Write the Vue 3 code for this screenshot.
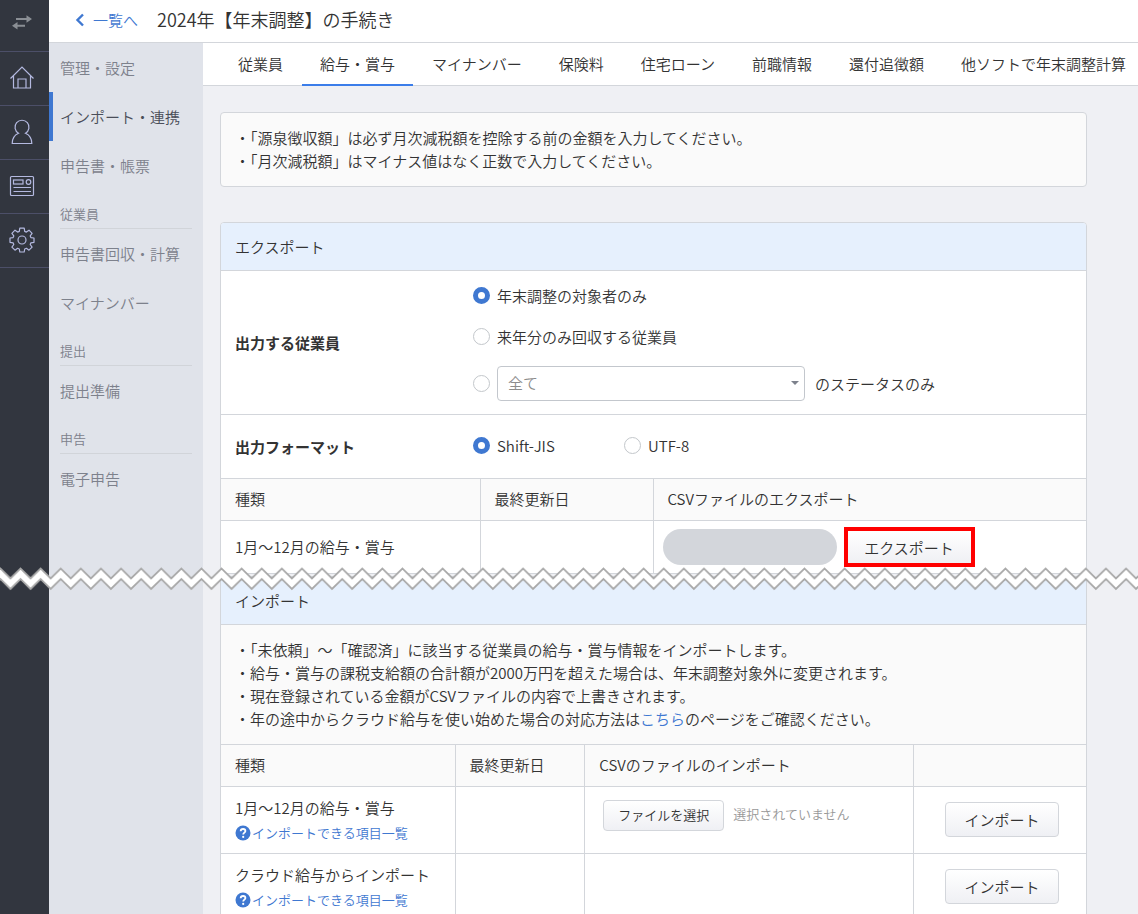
<script setup>
import { ref } from 'vue'

const menu = [
  { items: ['管理・設定', 'インポート・連携', '申告書・帳票'] },
  { heading: '従業員', items: ['申告書回収・計算', 'マイナンバー'] },
  { heading: '提出', items: ['提出準備'] },
  { heading: '申告', items: ['電子申告'] },
]
const activeMenu = 'インポート・連携'

const tabs = ['従業員', '給与・賞与', 'マイナンバー', '保険料', '住宅ローン', '前職情報', '還付追徴額', '他ソフトで年末調整計算']
const activeTab = '給与・賞与'

const target = ref('year')
const format = ref('sjis')
const status = ref('all')
</script>

<template>
  <div class="shell">
    <nav class="rail" aria-label="メイン">
      <button class="rail-item first" type="button" aria-label="切り替え">
        <svg width="24" height="24" viewBox="0 0 24 24" fill="#8a8e94">
          <path d="M6 7h10.500V4.200L22 8l-5.500 3.800V9H6zM15 15.800H7.500v2.800L2 14.800 7.500 11v2.800H15z" />
        </svg>
      </button>
      <button class="rail-item" type="button" aria-label="ホーム">
        <svg width="26" height="26" viewBox="0 0 26 26">
          <path d="M1.500 13.500 13 2l11.500 11.500M4.500 11v12h17V11M9 23v-9h8v9" />
        </svg>
      </button>
      <button class="rail-item" type="button" aria-label="従業員">
        <svg width="26" height="26" viewBox="0 0 26 26">
          <path d="M9.500 14.300a7 7 0 1 1 7 0c3.800 1.700 6.300 5.700 6.300 10.200H3.200c0-4.500 2.500-8.500 6.300-10.200z" />
        </svg>
      </button>
      <button class="rail-item" type="button" aria-label="お知らせ">
        <svg width="26" height="26" viewBox="0 0 26 26">
          <rect x="1.500" y="3.500" width="23" height="19" rx="1" />
          <rect x="4.500" y="7" width="9.500" height="4" />
          <circle cx="19.500" cy="9" r="2.300" />
          <path d="M4.500 14.500h17.500M4.500 18.500h17.500" />
        </svg>
      </button>
      <button class="rail-item" type="button" aria-label="設定">
        <svg width="26" height="26" viewBox="0 0 26 26">
          <circle cx="13" cy="13" r="4" />
          <path d="M10.800 1.200h4.400l.5 3.200 1.700.7 2.600-1.900 3.100 3.100-1.900 2.600.7 1.700 3.100.4v4.300l-3.100.5-.7 1.700 1.900 2.600-3.100 3.100-2.600-1.900-1.700.7-.5 3h-4.400l-.5-3-1.700-.7-2.600 1.900-3.100-3.100 1.900-2.600-.7-1.700-3.100-.5V11l3.100-.4.7-1.700-1.900-2.600L6 3.200l2.600 1.900 1.700-.7z" stroke-linejoin="round" />
        </svg>
      </button>
    </nav>

    <div class="body">
      <header class="topbar">
        <a class="back" href="#">
          <svg width="10" height="14" viewBox="0 0 10 14" aria-hidden="true">
            <path d="M8 1.500 2.500 7 8 12.500" fill="none" stroke="#3f78d1" stroke-width="2.400" />
          </svg>
          一覧へ
        </a>
        <h1>2024年【年末調整】の手続き</h1>
      </header>

      <div class="columns">
        <nav class="side" aria-label="手続きメニュー">
          <template v-for="(group, i) in menu" :key="i">
            <h2 v-if="group.heading">{{ group.heading }}</h2>
            <a v-for="item in group.items" :key="item" href="#" :class="{ active: item === activeMenu }">{{ item }}</a>
          </template>
        </nav>

        <div class="page">
          <nav class="tabs" aria-label="タブ">
            <a v-for="tab in tabs" :key="tab" href="#" :class="{ active: tab === activeTab }">{{ tab }}</a>
          </nav>

          <main>
            <ul class="notes notice">
              <li>・「源泉徴収額」は必ず月次減税額を控除する前の金額を入力してください。</li>
              <li>・「月次減税額」はマイナス値はなく正数で入力してください。</li>
            </ul>

            <section class="card export">
              <h2>エクスポート</h2>
              <div class="field" role="radiogroup" aria-labelledby="target-label">
                <strong id="target-label">出力する従業員</strong>
                <div class="stack">
                  <label class="option"><input v-model="target" type="radio" name="target" value="year" />年末調整の対象者のみ</label>
                  <label class="option"><input v-model="target" type="radio" name="target" value="next" />来年分のみ回収する従業員</label>
                  <div class="option">
                    <input v-model="target" type="radio" name="target" value="status" aria-label="ステータスで絞り込む" />
                    <span class="select">
                      <select id="status" v-model="status">
                        <option value="all">全て</option>
                      </select>
                    </span>
                    <label for="status">のステータスのみ</label>
                  </div>
                </div>
              </div>
              <div class="field" role="radiogroup" aria-labelledby="format-label">
                <strong id="format-label">出力フォーマット</strong>
                <div class="inline">
                  <label class="option"><input v-model="format" type="radio" name="format" value="sjis" />Shift-JIS</label>
                  <label class="option"><input v-model="format" type="radio" name="format" value="utf8" />UTF-8</label>
                </div>
              </div>
              <table>
                <colgroup><col class="w30" /><col class="w20" /><col class="w50" /></colgroup>
                <thead>
                  <tr><th>種類</th><th>最終更新日</th><th>CSVファイルのエクスポート</th></tr>
                </thead>
                <tbody>
                  <tr>
                    <td>1月～12月の給与・賞与</td>
                    <td></td>
                    <td class="actions">
                      <div class="action-row">
                        <span class="masked"></span>
                        <button class="btn highlighted" type="button">エクスポート</button>
                      </div>
                    </td>
                  </tr>
                </tbody>
              </table>
            </section>

            <section class="card import">
              <h2>インポート</h2>
              <ul class="notes">
                <li>・「未依頼」～「確認済」に該当する従業員の給与・賞与情報をインポートします。</li>
                <li>・給与・賞与の課税支給額の合計額が2000万円を超えた場合は、年末調整対象外に変更されます。</li>
                <li>・現在登録されている金額がCSVファイルの内容で上書きされます。</li>
                <li>・年の途中からクラウド給与を使い始めた場合の対応方法は<a href="#">こちら</a>のページをご確認ください。</li>
              </ul>
              <table>
                <colgroup><col class="w27" /><col class="w15" /><col class="w38" /><col class="w20" /></colgroup>
                <thead>
                  <tr><th>種類</th><th>最終更新日</th><th>CSVのファイルのインポート</th><th></th></tr>
                </thead>
                <tbody>
                  <tr v-for="(name, i) in ['1月～12月の給与・賞与', 'クラウド給与からインポート']" :key="name" class="tall">
                    <td>
                      {{ name }}
                      <a class="help" href="#">
                        <svg width="16" height="16" viewBox="0 0 16 16" aria-hidden="true">
                          <circle cx="8" cy="8" r="7.500" fill="#3f78d1" />
                          <path d="M5.700 6.300c0-1.500 1-2.300 2.400-2.300s2.300.8 2.300 2c0 1.600-2.200 1.700-2.200 3.500" fill="none" stroke="#fff" stroke-width="1.800" />
                          <circle cx="8.200" cy="11.900" r="1.100" fill="#fff" />
                        </svg>
                        インポートできる項目一覧
                      </a>
                    </td>
                    <td></td>
                    <td class="file-cell">
                      <label v-if="i === 0" class="file">
                        <input type="file" accept=".csv" />
                        <span class="btn small">ファイルを選択</span>
                        <span class="filename">選択されていません</span>
                      </label>
                    </td>
                    <td class="submit"><button class="btn" type="button">インポート</button></td>
                  </tr>
                </tbody>
              </table>
            </section>
          </main>
        </div>
      </div>
    </div>

    <svg class="tear" width="100%" height="24" aria-hidden="true">
      <defs>
        <pattern id="zigzag" width="20.100" height="24" patternUnits="userSpaceOnUse">
          <path d="M-10 12 .4 1.500 10.450 11.500 20.500 1.500 30 11V22L20.500 12 10.450 22 .4 12-10 22z" fill="#fff" stroke="#a9a9a9" stroke-width="1.800" />
        </pattern>
      </defs>
      <rect width="100%" height="24" fill="url(#zigzag)" />
    </svg>
  </div>
</template>

<style>
body {
  margin: 0;
}
</style>

<style scoped>
* {
  box-sizing: border-box;
}
.shell {
  position: relative;
  display: flex;
  height: 100vh;
  overflow: hidden;
  background: #eff0f4;
  color: #333;
  font-family: "Noto Sans CJK JP", "Noto Sans", sans-serif;
  font-size: 15px;
  font-weight: 350;
  line-height: 23px;
}
button,
select,
input {
  font: inherit;
  color: inherit;
}
a {
  color: #3f78d1;
  text-decoration: none;
}
h1,
h2,
ul {
  margin: 0;
  padding: 0;
  font-weight: inherit;
}
ul {
  list-style: none;
}

.rail {
  flex: none;
  width: 49px;
  background: #32363f;
}
.rail-item {
  display: flex;
  align-items: center;
  justify-content: center;
  width: 100%;
  height: 54px;
  padding: 0 5px 1px 0;
  border: 0;
  border-bottom: 1px solid #4c4f68;
  background: none;
}
.rail-item.first {
  height: 52px;
  padding-bottom: 6px;
}
.rail-item:not(.first) svg {
  fill: none;
  stroke: #b4b9e0;
  stroke-width: 1.2;
}

.body {
  display: flex;
  flex: 1;
  flex-direction: column;
  min-width: 0;
}
.topbar {
  display: flex;
  flex: none;
  align-items: center;
  gap: 19px;
  height: 43px;
  padding: 0 26px 3px;
  border-bottom: 1px solid #d3d6db;
  background: #fff;
}
.back {
  display: flex;
  align-items: center;
  gap: 8px;
}
h1 {
  font-size: 18px;
}
.columns {
  display: flex;
  flex: 1;
  min-height: 0;
}

.side {
  flex: none;
  width: 154px;
  background: #e0e3ea;
}
.side a {
  display: block;
  padding: 13px 0 13px 7px;
  border-left: 4px solid transparent;
  color: #7d818c;
  white-space: nowrap;
}
.side a.active {
  border-color: #3f78d1;
  color: #4a4e59;
}
.side h2 {
  margin: 0 11px;
  padding: 12px 0 3px;
  border-bottom: 1px solid #d1d4d9;
  color: #7d818c;
  font-size: 13px;
}

.page {
  flex: 1;
  min-width: 0;
  overflow-y: auto;
  scrollbar-width: none;
}
.tabs {
  display: flex;
  gap: 1px;
  height: 43px;
  padding-left: 17px;
  border-bottom: 1px solid #d3d6db;
  background: #fff;
  white-space: nowrap;
}
.tabs a {
  height: 43px;
  padding: 9px 18px 0;
  color: #333;
}
.tabs a.active {
  border-bottom: 2px solid #3b7de9;
}

main {
  padding: 26px 51px 0 17px;
}
.notes {
  padding: 13px 14px 14px;
  background: #fafafa;
}
.notice {
  border: 1px solid #d3d6db;
  border-radius: 4px;
}
.card {
  border: 1px solid #d3d6db;
  background: #fff;
}
.export {
  margin-top: 35px;
  border-radius: 4px 4px 0 0;
  overflow: hidden;
}
.import {
  margin-top: 2px;
}
.card h2 {
  padding: 12px 14px;
  border-bottom: 1px solid #d3d6db;
  background: #e6f0fd;
  font-size: 15px;
}
.field {
  display: flex;
  align-items: center;
  min-height: 64px;
  padding: 13px 14px;
  border-bottom: 1px solid #d3d6db;
}
.field strong {
  flex: none;
  width: 238px;
}
.stack {
  display: flex;
  flex-direction: column;
  gap: 18px;
}
.inline {
  display: flex;
  padding-bottom: 3px;
}
.inline .option {
  width: 151px;
}
.option {
  display: flex;
  align-items: center;
  gap: 7px;
}
.option input {
  flex: none;
  width: 17px;
  height: 17px;
  margin: 0;
  border: 1px solid #c3c7cb;
  border-radius: 50%;
  background: #fff;
  appearance: none;
}
.option input:checked {
  border: 5px solid #3f78d1;
}
.select {
  position: relative;
  width: 308px;
  margin-right: 3px;
}
.select select {
  display: block;
  width: 100%;
  height: 35px;
  padding: 0 10px 2px;
  border: 1px solid #c3c7cd;
  border-radius: 4px;
  background: #fff;
  color: #8c8c8c;
  appearance: none;
}
.select::after {
  content: "";
  position: absolute;
  top: 15px;
  right: 6px;
  border: 4px solid transparent;
  border-top-color: #7d818c;
  border-bottom: 0;
}

table {
  width: 100%;
  border-collapse: separate;
  border-spacing: 0;
  table-layout: fixed;
}
th,
td {
  padding: 8px 14px 10px;
  text-align: left;
}
th {
  height: 42px;
  border-bottom: 1px solid #d3d6db;
  background: #fafafa;
  font-weight: inherit;
}
td {
  height: 52px;
}
.export th:not(:last-child),
.export td:not(:last-child) {
  border-right: 1px solid #d3d6db;
}
.import th + th,
.import td + td {
  border-left: 1px solid #d3d6db;
}
.import th {
  border-top: 1px solid #d3d6db;
  height: 43px;
}
.w15 { width: 15%; }
.w20 { width: 20%; }
.w27 { width: 27%; }
.w30 { width: 30%; }
.w38 { width: 38%; }
.w50 { width: 50%; }
.tall td {
  height: 67px;
  border-bottom: 1px solid #d3d6db;
}
td.actions {
  padding: 6px 9px;
}
.action-row {
  display: flex;
  align-items: center;
  gap: 7px;
}
.masked {
  width: 174px;
  height: 36px;
  border-radius: 18px;
  background: #d3d6db;
}
.btn {
  width: 114px;
  height: 35px;
  padding: 0;
  border: 1px solid #d3d6db;
  border-radius: 4px;
  background: linear-gradient(#fff, #eff0f4);
  text-align: center;
}
.btn.highlighted {
  width: 131px;
  height: 40px;
  border: 4px solid #f00;
  border-radius: 0;
}
.btn.small {
  width: 121px;
  height: 31px;
  line-height: 27px;
}
.help {
  display: flex;
  align-items: center;
  gap: 1px;
  margin-top: 2px;
  font-size: 13px;
}
.tall td:first-child {
  padding: 8px 14px;
}
td.file-cell {
  padding: 13px 18px;
  vertical-align: top;
}
.file {
  display: flex;
  align-items: center;
  gap: 9px;
  font-size: 13px;
}
.file input {
  position: absolute;
  width: 1px;
  height: 1px;
  opacity: 0;
}
.filename {
  padding-bottom: 4px;
  color: #999;
}
td.submit {
  padding: 8px 12px 10px 16px;
  text-align: center;
}

.tear {
  position: absolute;
  top: 567px;
  left: 0;
}
</style>
